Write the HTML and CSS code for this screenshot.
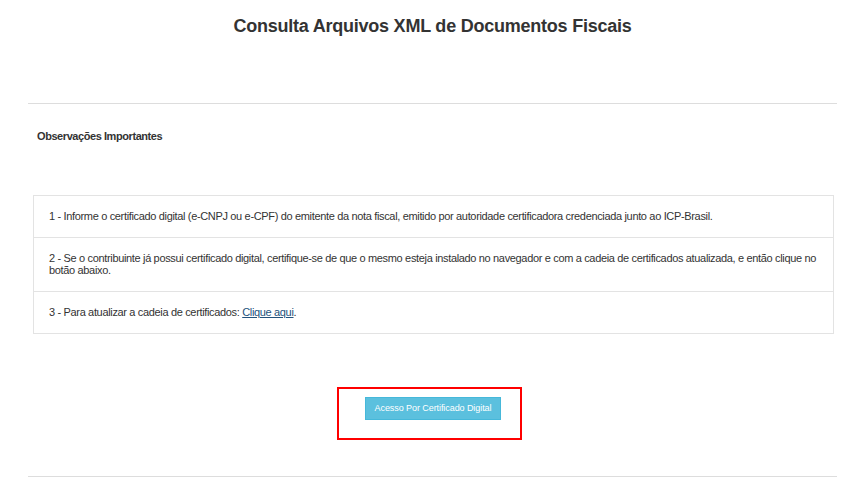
FILE: index.html
```html
<!DOCTYPE html>
<html lang="pt-BR">
<head>
    <meta charset="UTF-8">
    <meta name="viewport" content="width=device-width, initial-scale=1.0">
    <title>Consulta Arquivos XML de Documentos Fiscais</title>
    <link rel="stylesheet" href="styles.css">
</head>
<body>
    <div class="page">
        <h1 class="title">Consulta Arquivos XML de Documentos Fiscais</h1>
        <hr class="divider">

        <div class="panel">
            <div class="panel-heading">Observações Importantes</div>
            <ul class="list-group">
                <li class="list-item">1 - Informe o certificado digital (e-CNPJ ou e-CPF) do emitente da nota fiscal, emitido por autoridade certificadora credenciada junto ao ICP-Brasil.</li>
                <li class="list-item">2 - Se o contribuinte já possui certificado digital, certifique-se de que o mesmo esteja instalado no navegador e com a cadeia de certificados atualizada, e então clique no botão abaixo.</li>
                <li class="list-item">3 - Para atualizar a cadeia de certificados: <a href="#">Clique aqui</a>.</li>
            </ul>
        </div>

        <div class="actions">
            <div class="highlight">
                <button type="button" class="btn-cert">Acesso Por Certificado Digital</button>
            </div>
        </div>
        <hr class="divider divider-bottom">
    </div>
</body>
</html>
```

FILE: styles.css
```css
body {
    font-family: 'Liberation Sans', Arial, sans-serif;
    margin: 0;
    background-color: #fff;
    color: #333;
}
.page {
    padding: 0 4px 0 28px;
}
.title {
    margin: 15px 0 0;
    font-size: 18px;
    font-weight: 700;
    letter-spacing: -0.23px;
    text-align: center;
    line-height: 22px;
    color: #333;
}
.divider {
    margin: 66px 0 0;
    border: 0;
    border-top: 1px solid #ddd;
}
.divider-bottom {
    margin: 0;
}
.panel-heading {
    margin-top: 25px;
    padding-left: 9px;
    font-size: 11px;
    font-weight: 700;
    letter-spacing: -0.43px;
    line-height: 14px;
}
.list-group {
    list-style: none;
    margin: 52px 3px 0 5px;
    padding: 0;
    border: 1px solid #e3e3e3;
}
.list-item {
    padding: 14px 10px 15px 15px;
    font-size: 11px;
    letter-spacing: -0.34px;
    line-height: 12px;
    border-top: 1px solid #e3e3e3;
}
.list-item:first-child {
    border-top: 0;
}
.list-item a {
    color: #23527c;
}
.actions {
    display: flex;
    justify-content: center;
    padding: 53px 6px 36px 0;
}
.highlight {
    padding: 8px 19px 18px 26px;
    border: 2px solid #f00;
}
.btn-cert {
    display: block;
    padding: 5px 9px;
    font-family: 'Liberation Sans', Arial, sans-serif;
    font-size: 9px;
    letter-spacing: -0.07px;
    line-height: 11px;
    color: #fff;
    background-color: #5bc0de;
    border: 1px solid #46b8da;
    border-radius: 0;
}
```
